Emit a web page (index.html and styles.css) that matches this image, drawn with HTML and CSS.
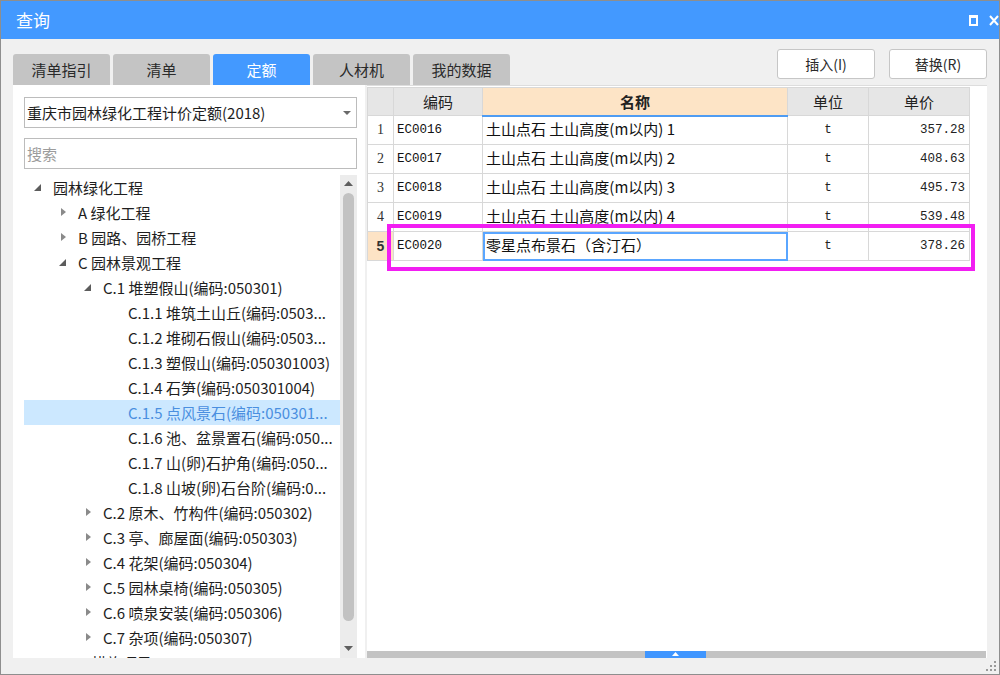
FILE: index.html
```html
<!DOCTYPE html>
<html lang="zh">
<head>
<meta charset="utf-8">
<title>查询</title>
<link rel="stylesheet" href="styles.css">
</head>
<body>
<div class="win">
  <div class="titlebar">
    <span class="title">查询</span>
    <div class="tb-icons">
      <span class="ic-max"></span>
      <svg class="ic-close" width="10" height="11" viewBox="0 0 10 11"><path d="M1 1 L9 10 M9 1 L1 10" stroke="#fff" stroke-width="2"/></svg>
    </div>
  </div>
  <div class="body">
    <div class="toolbar">
      <div class="tabs">
        <div class="tab">清单指引</div>
        <div class="tab">清单</div>
        <div class="tab active">定额</div>
        <div class="tab">人材机</div>
        <div class="tab">我的数据</div>
      </div>
      <div class="btns">
        <div class="btn">插入(I)</div>
        <div class="btn">替换(R)</div>
      </div>
    </div>
    <div class="main">
      <div class="left">
        <div class="combo">
          <span>重庆市园林绿化工程计价定额(2018)</span>
          <svg class="combo-arrow" width="8" height="4" viewBox="0 0 8 4"><path d="M0 0 H8 L4 4 Z" fill="#6a6a6a"/></svg>
        </div>
        <div class="search">搜索</div>
        <div class="treewrap">
          <div class="tree">
            <div class="row l0"><span class="mk exp"></span><span class="tx">园林绿化工程</span></div>
            <div class="row l1"><span class="mk col"></span><span class="tx">A 绿化工程</span></div>
            <div class="row l1"><span class="mk col"></span><span class="tx">B 园路、园桥工程</span></div>
            <div class="row l1"><span class="mk exp"></span><span class="tx">C 园林景观工程</span></div>
            <div class="row l2"><span class="mk exp"></span><span class="tx">C.1 堆塑假山(编码:050301)</span></div>
            <div class="row l3"><span class="mk"></span><span class="tx">C.1.1 堆筑土山丘(编码:0503...</span></div>
            <div class="row l3"><span class="mk"></span><span class="tx">C.1.2 堆砌石假山(编码:0503...</span></div>
            <div class="row l3"><span class="mk"></span><span class="tx">C.1.3 塑假山(编码:050301003)</span></div>
            <div class="row l3"><span class="mk"></span><span class="tx">C.1.4 石笋(编码:050301004)</span></div>
            <div class="row l3 sel"><span class="mk"></span><span class="tx">C.1.5 点风景石(编码:050301...</span></div>
            <div class="row l3"><span class="mk"></span><span class="tx">C.1.6 池、盆景置石(编码:050...</span></div>
            <div class="row l3"><span class="mk"></span><span class="tx">C.1.7 山(卵)石护角(编码:050...</span></div>
            <div class="row l3"><span class="mk"></span><span class="tx">C.1.8 山坡(卵)石台阶(编码:0...</span></div>
            <div class="row l2"><span class="mk col"></span><span class="tx">C.2 原木、竹构件(编码:050302)</span></div>
            <div class="row l2"><span class="mk col"></span><span class="tx">C.3 亭、廊屋面(编码:050303)</span></div>
            <div class="row l2"><span class="mk col"></span><span class="tx">C.4 花架(编码:050304)</span></div>
            <div class="row l2"><span class="mk col"></span><span class="tx">C.5 园林桌椅(编码:050305)</span></div>
            <div class="row l2"><span class="mk col"></span><span class="tx">C.6 喷泉安装(编码:050306)</span></div>
            <div class="row l2"><span class="mk col"></span><span class="tx">C.7 杂项(编码:050307)</span></div>
            <div class="row l1"><span class="mk col"></span><span class="tx">D 措施项目</span></div>
          </div>
          <div class="vscroll">
            <svg class="sa" width="9" height="5" viewBox="0 0 9 5"><path d="M0 5 L4.5 0 L9 5 Z" fill="#5f5f5f"/></svg>
            <div class="vthumb"></div>
            <svg class="sa" width="9" height="5" viewBox="0 0 9 5"><path d="M0 0 L4.5 5 L9 0 Z" fill="#5f5f5f"/></svg>
          </div>
        </div>
      </div>
      <div class="right">
        <table class="grid">
          <colgroup>
            <col class="c-no"><col class="c-code"><col class="c-name"><col class="c-unit"><col class="c-price">
          </colgroup>
          <thead>
            <tr><th></th><th>编码</th><th class="sort">名称</th><th>单位</th><th>单价</th></tr>
          </thead>
          <tbody>
            <tr><td class="no">1</td><td class="code">EC0016</td><td class="name">土山点石 土山高度(m以内) 1</td><td class="unit">t</td><td class="price">357.28</td></tr>
            <tr><td class="no">2</td><td class="code">EC0017</td><td class="name">土山点石 土山高度(m以内) 2</td><td class="unit">t</td><td class="price">408.63</td></tr>
            <tr><td class="no">3</td><td class="code">EC0018</td><td class="name">土山点石 土山高度(m以内) 3</td><td class="unit">t</td><td class="price">495.73</td></tr>
            <tr><td class="no">4</td><td class="code">EC0019</td><td class="name">土山点石 土山高度(m以内) 4</td><td class="unit">t</td><td class="price">539.48</td></tr>
            <tr class="cur"><td class="no">5</td><td class="code">EC0020</td><td class="name focus">零星点布景石（含汀石）</td><td class="unit">t</td><td class="price">378.26</td></tr>
          </tbody>
        </table>
        <div class="spacer"></div>
        <div class="hbar"><div class="hthumb"><svg width="7" height="4" viewBox="0 0 7 4"><path d="M0 4 L3.5 0 L7 4 Z" fill="#fff"/></svg></div></div>
        <div class="mark"></div>
      </div>
    </div>
    <div class="status">
      <svg class="grip" width="10" height="10" viewBox="0 0 10 10">
        <rect x="8" y="0" width="2" height="2" fill="#9a9a9a"/>
        <rect x="4" y="4" width="2" height="2" fill="#9a9a9a"/>
        <rect x="8" y="4" width="2" height="2" fill="#9a9a9a"/>
        <rect x="0" y="8" width="2" height="2" fill="#9a9a9a"/>
        <rect x="4" y="8" width="2" height="2" fill="#9a9a9a"/>
        <rect x="8" y="8" width="2" height="2" fill="#9a9a9a"/>
      </svg>
    </div>
  </div>
</div>
</body>
</html>
```
FILE: styles.css
```css
* { box-sizing: border-box; }
html, body { margin: 0; padding: 0; background: #ffffff; }
body { font-family: "Noto Sans CJK SC", "Noto Sans", sans-serif; color: #222; }

.win {
  width: 1000px;
  height: 675px;
  border: 1px solid #8e8e8e;
  display: flex;
  flex-direction: column;
  overflow: hidden;
  background: #f0f0f0;
}

.titlebar {
  height: 38px;
  background: #4399ff;
  display: flex;
  align-items: center;
  justify-content: space-between;
  padding: 0 0 0 15px;
  color: #fff;
}
.title { font-size: 17px; line-height: 20px; }
.tb-icons { display: flex; align-items: center; gap: 11px; padding-right: 0; }
.ic-max {
  width: 9px; height: 11px;
  border: 2px solid #fff;
  border-top-width: 3px;
  display: block;
}
.ic-close { display: block; }

.body { flex: 1; display: flex; flex-direction: column; }

.toolbar {
  height: 46px;
  display: flex;
  justify-content: space-between;
  align-items: flex-end;
  padding: 0 12px 0 12px;
}
.tabs { display: flex; gap: 3px; }
.tab {
  width: 97px;
  height: 31px;
  background: #c4c4c4;
  border-radius: 3px 3px 0 0;
  text-align: center;
  font-size: 15px;
  line-height: 31px;
  color: #2a2a2a;
}
.tab.active { background: #4399ff; color: #fff; }
.btns { display: flex; gap: 14px; margin-bottom: 6px; }
.btn {
  width: 98px;
  height: 30px;
  background: #fff;
  border: 1px solid #c6c6c6;
  border-radius: 3px;
  text-align: center;
  font-size: 14px;
  line-height: 28px;
  color: #2a2a2a;
}

.main {
  height: 573px;
  display: flex;
  gap: 2px;
  padding: 0 12px;
}
.left {
  width: 352px;
  background: #fff;
  padding: 12px 8px 0 11px;
  display: flex;
  flex-direction: column;
  overflow: hidden;
}
.combo {
  height: 31px;
  border: 1px solid #bcbcbc;
  display: flex;
  align-items: center;
  justify-content: space-between;
  padding: 0 5px 0 2px;
  font-size: 15px;
  color: #1e1e1e;
}
.combo-arrow { display: block; }
.search {
  margin-top: 10px;
  height: 31px;
  border: 1px solid #bcbcbc;
  padding-left: 2px;
  font-size: 15px;
  line-height: 29px;
  color: #9c9c9c;
}
.treewrap {
  margin-top: 6px;
  flex: 1;
  display: flex;
  min-height: 0;
}
.tree { width: 316px; overflow: hidden; }
.row {
  height: 25px;
  display: flex;
  align-items: center;
  font-size: 15px;
  color: #1e1e1e;
  white-space: nowrap;
}
.row.l0 { padding-left: 8px; }
.row.l1 { padding-left: 33px; }
.row.l2 { padding-left: 58px; }
.row.l3 { padding-left: 83px; }
.row.sel { background: #cce8ff; color: #4a8fe0; }
.mk { width: 21px; height: 25px; position: relative; flex: none; }
.mk.exp::after {
  content: "";
  position: absolute;
  left: 2px; top: 9px;
  width: 0; height: 0;
  border-left: 7px solid transparent;
  border-bottom: 7px solid #5c5c5c;
}
.mk.col::after {
  content: "";
  position: absolute;
  left: 4px; top: 8px;
  width: 0; height: 0;
  border-top: 4.5px solid transparent;
  border-bottom: 4.5px solid transparent;
  border-left: 5px solid #8a8a8a;
}
.tx { line-height: 25px; }

.vscroll {
  width: 17px;
  background: #ececec;
  display: flex;
  flex-direction: column;
  align-items: center;
  padding: 3px 0 4px;
}
.sa { display: block; flex: none; margin: 3px 0; }
.vthumb {
  width: 11px;
  height: 428px;
  margin-top: 4px;
  background: #c2c2c2;
  border-radius: 6px;
  flex: none;
}
.vscroll .sa:last-child { margin-top: auto; }

.right {
  width: 620px;
  background: #fff;
  position: relative;
  display: flex;
  flex-direction: column;
  border-top: 1px solid #dddddd;
}
.grid {
  border-collapse: collapse;
  table-layout: fixed;
  width: 602px;
  margin-top: 1px;
}
.c-no { width: 26px; }
.c-code { width: 89px; }
.c-name { width: 305px; }
.c-unit { width: 81px; }
.c-price { width: 101px; }
.grid th, .grid td {
  border: 1px solid #d8d8d8;
  padding: 0;
  overflow: hidden;
  white-space: nowrap;
}
.grid thead tr { height: 28px; }
.grid tbody tr { height: 29px; }
.grid th {
  background: #e6e6e6;
  font-weight: 400;
  font-size: 15px;
  color: #222;
  text-align: center;
}
.grid th.sort {
  background: #fde4c6;
  font-weight: 700;
  border-bottom: 2px solid #4f9cf2;
}
.grid td.no {
  text-align: center;
  font-family: "Liberation Serif", serif;
  font-size: 14px;
  color: #333;
}
.grid tr.cur td.no { background: #fde3c5; font-weight: 700; font-family: "Liberation Sans", sans-serif; }
.grid td.code {
  font-family: "Liberation Mono", monospace;
  font-size: 12.5px;
  padding-left: 3px;
  color: #111;
}
.grid tr.cur td.code { border-left: 1px solid #a9cbf2; }
.grid td.name {
  font-size: 15px;
  line-height: 18px;
  padding: 0 0 3px 3px;
  color: #111;
}
.grid td.focus { outline: 2px solid #5aa6ff; outline-offset: -2px; }
.grid td.unit {
  text-align: center;
  font-family: "Liberation Mono", monospace;
  font-size: 12.5px;
}
.grid td.price {
  text-align: right;
  font-family: "Liberation Mono", monospace;
  font-size: 12.5px;
  padding-right: 4px;
}
.spacer { flex: 1; }
.hbar {
  height: 7px;
  background: #c3c3c3;
  width: 619px;
  flex: none;
}
.hthumb {
  margin-left: 278px;
  width: 61px;
  height: 7px;
  background: #3f96ff;
  display: flex;
  justify-content: center;
  align-items: flex-start;
  padding-top: 1px;
}
.hthumb svg { display: block; }
.mark {
  position: absolute;
  left: 20px;
  top: 138px;
  width: 588px;
  height: 47px;
  border: 4px solid #f21ef2;
}

.status {
  flex: 1;
  display: flex;
  justify-content: flex-end;
  align-items: flex-end;
  padding: 0 3px 3px 0;
}
.grip { display: block; }
```
